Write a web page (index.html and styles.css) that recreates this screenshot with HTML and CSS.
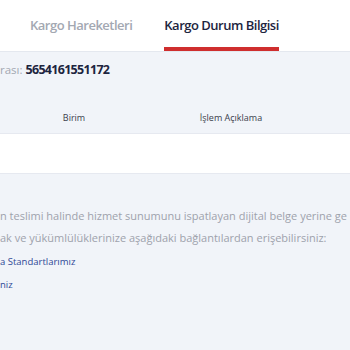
FILE: index.html
```html
<!DOCTYPE html>
<html lang="tr">
<head>
  <meta charset="utf-8">
  <title>Kargo Durum Bilgisi</title>
  <link rel="stylesheet" href="styles.css">
</head>
<body>
  <!-- tabs -->
  <nav class="tabs">
    <a class="tab">Kargo Hareketleri</a>
    <a class="tab active">Kargo Durum Bilgisi</a>
  </nav>

  <section class="content">
    <p class="tracking">rası: <b>5654161551172</b></p>

    <div class="table">
      <div class="table-head">
        <span class="col-unit">Birim</span>
        <span class="col-desc">İşlem Açıklama</span>
      </div>
      <div class="table-row"></div>
    </div>

    <p class="info">n teslimi halinde hizmet sunumunu ispatlayan dijital belge yerine ge<br>ak ve yükümlülüklerinize aşağıdaki bağlantılardan erişebilirsiniz:</p>

    <ul class="links">
      <li><a href="#">a Standartlarımız</a></li>
      <li><a href="#">niz</a></li>
    </ul>
  </section>
</body>
</html>
```

FILE: styles.css
```css
body {
  margin: 0;
  font-family: "Open Sans", "DejaVu Sans", sans-serif;
  background-color: #f1f4f9;
  overflow: hidden;
}

.tabs {
  display: flex;
  height: 52px;
  background-color: #ffffff;
  border-bottom: 1px solid #e4e8ef;
  box-sizing: border-box;
  padding-left: 30px;
}

.tab {
  display: flex;
  align-items: center;
  padding-top: 2px;
  font-size: 13px;
  font-weight: 600;
  letter-spacing: -0.5px;
  color: #a3a8b2;
  border-bottom: 4px solid transparent;
  margin-right: 32px;
  white-space: nowrap;
}

.tab.active {
  color: #1d2540;
  border-bottom-color: #cf2e2e;
}

.content {
  padding-top: 7px;
}

.tracking {
  margin: 0;
  height: 22px;
  line-height: 22px;
  font-size: 11.5px;
  color: #a3a8b2;
  white-space: nowrap;
}

.tracking b {
  color: #1d2540;
  font-weight: 700;
  font-size: 12.5px;
  letter-spacing: -0.7px;
}

.table {
  margin-top: 21px;
}

.table-head {
  display: flex;
  height: 31px;
  align-items: center;
  font-size: 9px;
  color: #3b404c;
}

.col-unit {
  width: 148px;
  text-align: center;
}

.col-desc {
  width: 166px;
  text-align: center;
}

.table-row {
  height: 39px;
  background-color: #ffffff;
  border-top: 1px solid #e6e9f0;
  border-bottom: 1px solid #e6e9f0;
}

.info {
  margin: 31px 0 0;
  font-size: 11px;
  line-height: 22px;
  color: #9ea2ac;
  white-space: nowrap;
}

.links {
  list-style: none;
  margin: -1px 0 0;
  padding: 0;
}

.links li {
  height: 23px;
  line-height: 23px;
}

.links a {
  font-size: 9.5px;
  color: #2e4896;
  text-decoration: none;
}
```
